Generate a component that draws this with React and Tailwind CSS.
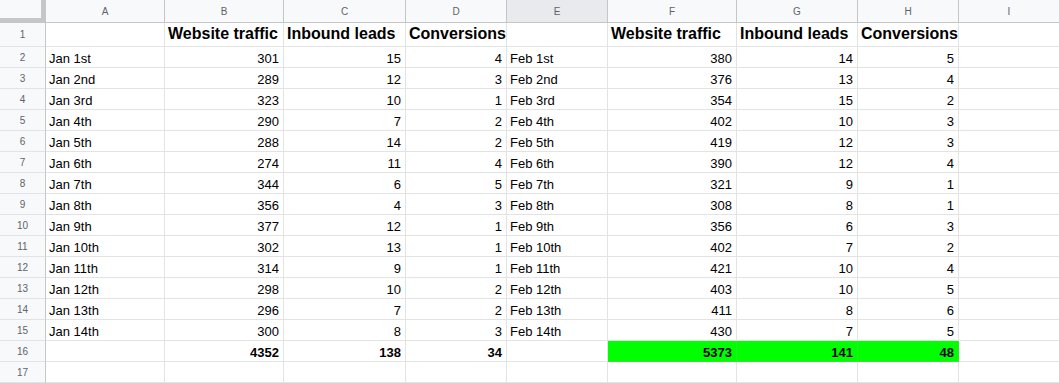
import React from "react";

const jan = [
  ["Jan 1st", 301, 15, 4],
  ["Jan 2nd", 289, 12, 3],
  ["Jan 3rd", 323, 10, 1],
  ["Jan 4th", 290, 7, 2],
  ["Jan 5th", 288, 14, 2],
  ["Jan 6th", 274, 11, 4],
  ["Jan 7th", 344, 6, 5],
  ["Jan 8th", 356, 4, 3],
  ["Jan 9th", 377, 12, 1],
  ["Jan 10th", 302, 13, 1],
  ["Jan 11th", 314, 9, 1],
  ["Jan 12th", 298, 10, 2],
  ["Jan 13th", 296, 7, 2],
  ["Jan 14th", 300, 8, 3],
];
const feb = [
  ["Feb 1st", 380, 14, 5],
  ["Feb 2nd", 376, 13, 4],
  ["Feb 3rd", 354, 15, 2],
  ["Feb 4th", 402, 10, 3],
  ["Feb 5th", 419, 12, 3],
  ["Feb 6th", 390, 12, 4],
  ["Feb 7th", 321, 9, 1],
  ["Feb 8th", 308, 8, 1],
  ["Feb 9th", 356, 6, 3],
  ["Feb 10th", 402, 7, 2],
  ["Feb 11th", 421, 10, 4],
  ["Feb 12th", 403, 10, 5],
  ["Feb 13th", 411, 8, 6],
  ["Feb 14th", 430, 7, 5],
];

const letters = ["A", "B", "C", "D", "E", "F", "G", "H", "I"];

function Cell({ children, align = "left", bold = false, green = false, big = false, h = "h-[21px]" }) {
  return (
    <div
      className={
        "flex items-end whitespace-nowrap border-r border-b " +
        h +
        " " +
        (green ? "bg-[#00ff00] border-[#2ee82e] " : "bg-white border-[#e2e3e3] ") +
        (align === "right" ? "justify-end pr-[4px] pl-[3px] " : "justify-start pl-[3px] ") +
        (big ? "text-[16px] leading-[19px] pb-[3px] font-bold " : "text-[13px] leading-[17px] ") +
        (bold ? "font-bold " : "")
      }
    >
      {children}
    </div>
  );
}

function RowHead({ n, h = "h-[21px]" }) {
  return (
    <div
      className={
        "flex items-center justify-center border-r border-b border-r-[#c4c7c5] border-b-[#e2e3e3] bg-[#f8f9fa] text-[10px] text-[#5f6368] " +
        h
      }
    >
      {n}
    </div>
  );
}

export default function App() {
  const rows = [];
  for (let i = 0; i < 14; i++) {
    const j = jan[i];
    const f = feb[i];
    rows.push(
      <React.Fragment key={i}>
        <RowHead n={i + 2} />
        <Cell>{j[0]}</Cell>
        <Cell align="right">{j[1]}</Cell>
        <Cell align="right">{j[2]}</Cell>
        <Cell align="right">{j[3]}</Cell>
        <Cell>{f[0]}</Cell>
        <Cell align="right">{f[1]}</Cell>
        <Cell align="right">{f[2]}</Cell>
        <Cell align="right">{f[3]}</Cell>
        <Cell />
      </React.Fragment>
    );
  }

  return (
    <div
      className="w-[1059px] h-[383px] overflow-hidden bg-white text-black"
      style={{ fontFamily: '"Liberation Sans", Arial, sans-serif' }}
    >
      <div className="grid grid-cols-[46px_119px_119px_122px_101px_101px_129px_121px_101px_101px]">
        {/* header row */}
        <div className="h-[23px] border-r-[5px] border-b-[5px] border-[#c4c7c5] bg-[#f8f9fa]" />
        {letters.map((l) => (
          <div
            key={l}
            className={
              "flex h-[23px] items-center justify-center border-r border-b border-[#c4c7c5] text-[10px] text-[#5f6368] " +
              (l === "E" ? "bg-[#e8eaed]" : "bg-[#f8f9fa]")
            }
          >
            {l}
          </div>
        ))}

        {/* row 1 */}
        <RowHead n={1} h="h-[24px]" />
        <Cell h="h-[24px]" />
        <Cell h="h-[24px]" big>Website traffic</Cell>
        <Cell h="h-[24px]" big>Inbound leads</Cell>
        <Cell h="h-[24px]" big>Conversions</Cell>
        <Cell h="h-[24px]" />
        <Cell h="h-[24px]" big>Website traffic</Cell>
        <Cell h="h-[24px]" big>Inbound leads</Cell>
        <Cell h="h-[24px]" big>Conversions</Cell>
        <Cell h="h-[24px]" />

        {rows}

        {/* row 16 */}
        <RowHead n={16} />
        <Cell />
        <Cell align="right" bold>4352</Cell>
        <Cell align="right" bold>138</Cell>
        <Cell align="right" bold>34</Cell>
        <Cell />
        <Cell align="right" bold green>5373</Cell>
        <Cell align="right" bold green>141</Cell>
        <Cell align="right" bold green>48</Cell>
        <Cell />

        {/* row 17 */}
        <RowHead n={17} />
        <Cell />
        <Cell />
        <Cell />
        <Cell />
        <Cell />
        <Cell />
        <Cell />
        <Cell />
        <Cell />
      </div>
    </div>
  );
}
